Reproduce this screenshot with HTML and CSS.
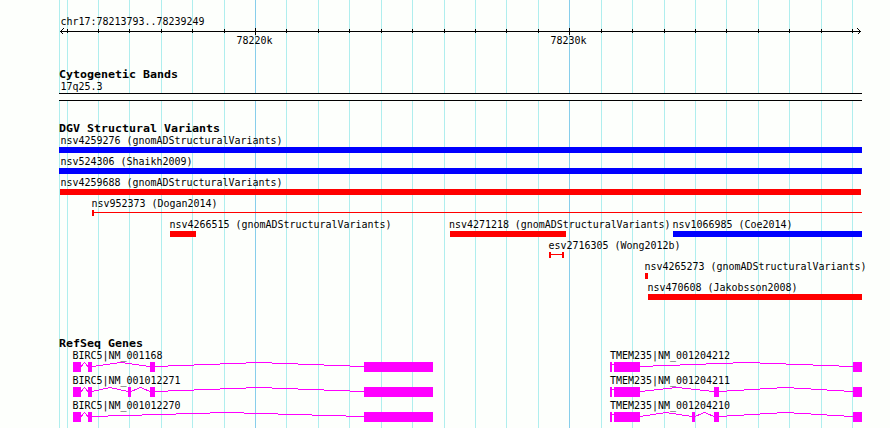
FILE: index.html
```
<!DOCTYPE html>
<html lang="en">
<head>
<meta charset="utf-8">
<title>chr17:78213793..78239249</title>
<link rel="stylesheet" href="styles.css">
</head>
<body>
<main class="browser">
  <svg class="grid" viewBox="0 0 890 428" aria-hidden="true">
    <path class="minor" d="M59.5 0V428M67.5 0V428M98.5 0V428M129.5 0V428M161.5 0V428M192.5 0V428M224.5 0V428M286.5 0V428M318.5 0V428M349.5 0V428M381.5 0V428M412.5 0V428M444.5 0V428M475.5 0V428M506.5 0V428M538.5 0V428M601.5 0V428M632.5 0V428M664.5 0V428M695.5 0V428M726.5 0V428M758.5 0V428M789.5 0V428M821.5 0V428M852.5 0V428"/>
    <path class="major" d="M255.5 0V428M569.5 0V428"/>
  </svg>

  <section class="track ruler">
    <svg viewBox="0 0 890 60">
      <text x="60.4" y="25" textLength="144" lengthAdjust="spacingAndGlyphs">chr17:78213793..78239249</text>
      <path class="axis" d="M60 31.5H861M67.5 29V33M98.5 29V33M129.5 29V33M161.5 29V33M192.5 29V33M224.5 29V33M286.5 29V33M318.5 29V33M349.5 29V33M381.5 29V33M412.5 29V33M444.5 29V33M475.5 29V33M506.5 29V33M538.5 29V33M601.5 29V33M632.5 29V33M664.5 29V33M695.5 29V33M726.5 29V33M758.5 29V33M789.5 29V33M821.5 29V33M852.5 29V33M255.5 28V35M569.5 28V35"/>
      <path class="axis" d="M63.5 28.5L60.5 31.5L63.5 34.5M857.5 28.5L860.5 31.5L857.5 34.5"/>
      <text x="236.4" y="44" textLength="36" lengthAdjust="spacingAndGlyphs">78220k</text>
      <text x="550.4" y="44" textLength="36" lengthAdjust="spacingAndGlyphs">78230k</text>
    </svg>
  </section>

  <section class="track cytobands">
    <svg viewBox="0 60 890 54">
      <text class="title" x="59" y="78" textLength="119" lengthAdjust="spacingAndGlyphs">Cytogenetic Bands</text>
      <text x="60.4" y="90" textLength="42" lengthAdjust="spacingAndGlyphs">17q25.3</text>
      <rect class="band" x="59" y="93" width="803" height="8"/>
      <path class="axis" d="M59 93.5H862M59 100.5H862"/>
    </svg>
  </section>

  <section class="track variants">
    <svg viewBox="0 114 890 216">
      <text class="title" x="59" y="132" textLength="161" lengthAdjust="spacingAndGlyphs">DGV Structural Variants</text>
      <text x="60.4" y="144" textLength="222" lengthAdjust="spacingAndGlyphs">nsv4259276 (gnomADStructuralVariants)</text>
      <rect class="gain" x="59" y="147" width="803" height="6"/>
      <text x="60.4" y="165" textLength="132" lengthAdjust="spacingAndGlyphs">nsv524306 (Shaikh2009)</text>
      <rect class="gain" x="59" y="168" width="803" height="6"/>
      <text x="60.4" y="186" textLength="222" lengthAdjust="spacingAndGlyphs">nsv4259688 (gnomADStructuralVariants)</text>
      <rect class="loss" x="60" y="189" width="801" height="6"/>
      <text x="91.4" y="207" textLength="126" lengthAdjust="spacingAndGlyphs">nsv952373 (Dogan2014)</text>
      <path class="loss" d="M92 210h2v2H862v1H94v3h-2z"/>
      <text x="169.4" y="228" textLength="222" lengthAdjust="spacingAndGlyphs">nsv4266515 (gnomADStructuralVariants)</text>
      <rect class="loss" x="170" y="231" width="26" height="6"/>
      <text x="449" y="228" textLength="221.5" lengthAdjust="spacingAndGlyphs">nsv4271218 (gnomADStructuralVariants)</text>
      <rect class="loss" x="450" y="231" width="116" height="6"/>
      <text x="672.6" y="228" textLength="120" lengthAdjust="spacingAndGlyphs">nsv1066985 (Coe2014)</text>
      <rect class="gain" x="673" y="231" width="189" height="6"/>
      <text x="548.4" y="249" textLength="132" lengthAdjust="spacingAndGlyphs">esv2716305 (Wong2012b)</text>
      <path class="loss" d="M549 252h2v2h11v-2h2v6h-2v-3h-11v3h-2z"/>
      <text x="644.4" y="270" textLength="222" lengthAdjust="spacingAndGlyphs">nsv4265273 (gnomADStructuralVariants)</text>
      <rect class="loss" x="645" y="273" width="3" height="6"/>
      <text x="647.4" y="291" textLength="150" lengthAdjust="spacingAndGlyphs">nsv470608 (Jakobsson2008)</text>
      <rect class="loss" x="648" y="294" width="214" height="6"/>
    </svg>
  </section>

  <section class="track genes">
    <svg viewBox="0 330 890 98">
      <text class="title" x="59" y="347" textLength="84" lengthAdjust="spacingAndGlyphs">RefSeq Genes</text>

      <path class="intron" d="M81 366.5L84.5 362.5L88 366.5M92 366.5H96M96 365.5H103M103 364.5H110M110 363.5H117M117 362.5H125M125 363.5H132M132 364.5H139M139 365.5H146M146 366.5H150"/>
      <path class="intron" d="M155 366.5H168M168 365.5H194M194 364.5H220M220 363.5H246M246 362.5H272M272 363.5H298M298 364.5H324M324 365.5H350M350 366.5H364"/>
      <path class="intron" d="M612 364.5H614M640 366.5H653M653 365.5H680M680 364.5H706M706 363.5H733M733 362.5H760M760 363.5H786M786 364.5H813M813 365.5H839M839 366.5H853"/>
      <path class="exon" d="M73 362h8v10h-8zM88 362h4v10h-4zM150 362h5v10h-5zM364 362h69v10h-69zM610 362h2v10h-2zM614 362h26v10h-26zM853 362h9v10h-9z"/>
      <text x="72.4" y="359" textLength="90" lengthAdjust="spacingAndGlyphs">BIRC5|NM_001168</text>
      <text x="610" y="359" textLength="120" lengthAdjust="spacingAndGlyphs">TMEM235|NM_001204212</text>

      <path class="intron" d="M81 391.5L84.5 387.5L88 391.5M92 391.5H94M94 390.5H99M99 389.5H103M103 388.5H108M108 387.5H112M112 388.5H117M117 389.5H121M121 390.5H126M126 391.5H128M131 391.5L140.500 387.5L150 391.5"/>
      <path class="intron" d="M155 391.5H168M168 390.5H194M194 389.5H220M220 388.5H246M246 387.5H272M272 388.5H298M298 389.5H324M324 390.5H350M350 391.5H364"/>
      <path class="intron" d="M612 389.5H614M640 391.5H645M645 390.5H654M654 389.5H663M663 388.5H672M672 387.5H682M682 388.5H691M691 389.5H700M700 390.5H709M709 391.5H714"/>
      <path class="intron" d="M719 391.5H727M727 390.5H744M744 389.5H760M760 388.5H777M777 387.5H794M794 388.5H811M811 389.5H827M827 390.5H844M844 391.5H853"/>
      <path class="exon" d="M73 387h8v10h-8zM88 387h4v10h-4zM128 387h3v10h-3zM150 387h5v10h-5zM364 387h69v10h-69zM610 387h2v10h-2zM614 387h26v10h-26zM714 387h5v10h-5zM853 387h9v10h-9z"/>
      <text x="72.4" y="384" textLength="108" lengthAdjust="spacingAndGlyphs">BIRC5|NM_001012271</text>
      <text x="610" y="384" textLength="120" lengthAdjust="spacingAndGlyphs">TMEM235|NM_001204211</text>

      <path class="intron" d="M81 416.5L84.5 412.5L88 416.5M92 416.5H108M108 415.5H142M142 414.5H176M176 413.5H210M210 412.5H244M244 413.5H278M278 414.5H312M312 415.5H346M346 416.5H364"/>
      <path class="intron" d="M612 414.5H614M640 416.5H643M643 415.5H650M650 414.5H656M656 413.5H663M663 412.5H669M669 413.5H676M676 414.5H682M682 415.5H689M689 416.5H692M695 416.5L704.500 412.5L714 416.5"/>
      <path class="intron" d="M719 416.5H727M727 415.5H744M744 414.5H760M760 413.5H777M777 412.5H794M794 413.5H811M811 414.5H827M827 415.5H844M844 416.5H853"/>
      <path class="exon" d="M73 412h8v10h-8zM88 412h4v10h-4zM364 412h69v10h-69zM610 412h2v10h-2zM614 412h26v10h-26zM692 412h3v10h-3zM714 412h5v10h-5zM853 412h9v10h-9z"/>
      <text x="72.4" y="409" textLength="108" lengthAdjust="spacingAndGlyphs">BIRC5|NM_001012270</text>
      <text x="610" y="409" textLength="120" lengthAdjust="spacingAndGlyphs">TMEM235|NM_001204210</text>
    </svg>
  </section>
</main>
</body>
</html>
```
FILE: styles.css
```
body {
  margin: 0;
  background: #fdfffc;
}

.browser {
  position: relative;
  display: flex;
  flex-direction: column;
  width: 890px;
  height: 428px;
  overflow: hidden;
}

/* Vertical coordinate lines lie behind every track */
.grid {
  position: absolute;
  inset: 0;
  width: 890px;
  height: 428px;
}

.track {
  position: relative;
  flex: none;
}

.track svg {
  display: block;
  width: 100%;
  height: 100%;
}

.ruler { height: 60px; }
.cytobands { height: 54px; }
.variants { height: 216px; }
.genes { height: 98px; }

svg {
  shape-rendering: crispEdges;
}

text {
  font-family: "DejaVu Sans Mono", monospace;
  font-size: 11px;
  fill: #000;
}

.title {
  font-size: 11px;
  font-weight: bold;
}

.minor { stroke: #afeeee; }
.major { stroke: #87ceeb; }

.axis {
  fill: none;
  stroke: #000;
}

.band { fill: #fdfffc; }
.gain { fill: #00f; }
.loss { fill: #f00; }
.exon { fill: #f0f; }

.intron {
  fill: none;
  stroke: #f0f;
}
```
